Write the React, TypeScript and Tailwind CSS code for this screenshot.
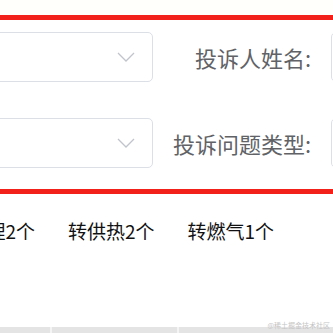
const cjk = { fontFamily: '"Noto Sans CJK SC", "Noto Sans", sans-serif' };

function SelectBox({ className }: { className: string }) {
  return (
    <div
      className={`flex h-[50px] shrink-0 items-center justify-end rounded-[5px] border border-[#dcdfe6] bg-white pr-[17px] ${className}`}
    >
      <svg width="18" height="10" viewBox="0 0 18 10" fill="none">
        <polyline points="1,1 9,9 17,1" stroke="#c0c4cc" strokeWidth="1.3" />
      </svg>
    </div>
  );
}

function FormRow({ label }: { label: string }) {
  return (
    <div className="flex items-center">
      <SelectBox className="ml-[-60px] w-[213px]" />
      <div className="w-[178px] shrink-0 whitespace-nowrap pr-[20px] text-right text-[22px] leading-[28px] text-[#606266]">
        {label}
      </div>
      <div className="h-[50px] w-[120px] shrink-0 rounded-[5px] border border-[#dcdfe6] bg-white" />
    </div>
  );
}

export default function App() {
  const counts = ["转供热2个", "转燃气1个"];

  return (
    <div className="relative flex h-[333px] w-[333px] flex-col overflow-hidden bg-white" style={cjk}>
      <div className="h-[15px] shrink-0 bg-[#fffffb]" />

      {/* highlighted query form */}
      <div className="flex h-[179px] shrink-0 flex-col gap-[36px] border-y-[5px] border-[#f2221b] pt-[12px]">
        <FormRow label="投诉人姓名:" />
        <FormRow label="投诉问题类型:" />
      </div>

      {/* summary */}
      <div className="mt-[24px] flex items-center gap-[33px] whitespace-nowrap text-[19px] leading-[26px] text-[#111]">
        <div className="flex w-[35px] shrink-0 justify-end overflow-hidden">
          <span>转维修处理2个</span>
        </div>
        {counts.map((c) => (
          <span key={c}>{c}</span>
        ))}
      </div>

      <div className="flex-1" />

      {/* table header edge */}
      <div className="flex h-[6px] shrink-0 bg-[#e4e4e4]">
        <div className="w-[52px] border-r-2 border-[#f4f4f4]" />
        <div className="w-[127px] border-r-2 border-[#f4f4f4]" />
      </div>

      <span className="absolute bottom-[4px] right-[3px] text-[7px] leading-[8px] text-[#c4c4c4]">
        @稀土掘金技术社区
      </span>
    </div>
  );
}
